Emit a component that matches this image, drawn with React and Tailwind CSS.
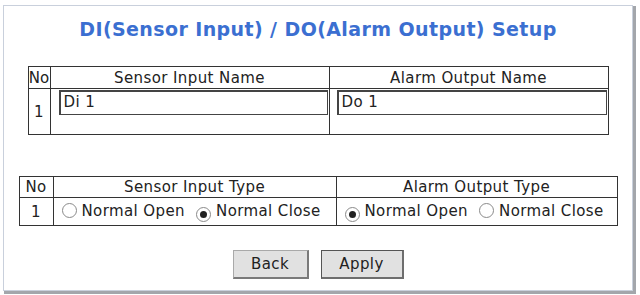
import React from "react";

const font = { fontFamily: '"DejaVu Sans", Verdana, sans-serif' };

function Radio({ checked, second }) {
  return (
    <span
      className={
        second
          ? "inline-flex items-center justify-center w-[15px] h-[15px] rounded-full border border-[#8a8a8a] bg-white ml-[11px] mr-[5px] align-[-2px]"
          : "inline-flex items-center justify-center w-[15px] h-[15px] rounded-full border border-[#8a8a8a] bg-white ml-[1px] mr-[5px] align-[-2px]"
      }
    >
      {checked && <span className="w-[7px] h-[7px] rounded-full bg-[#222]" />}
    </span>
  );
}

export default function App() {
  return (
    <div className="w-[640px] h-[295px] bg-white overflow-hidden text-[#222]" style={font}>
      <div className="ml-[3px] mt-[5px] w-[630px] h-[286px] bg-white border border-[#c9d0dc] shadow-[2px_2px_0_1px_#a3a6ab] flex flex-col items-center">
        <h1 className="mt-[12px] text-[19px] leading-[22px] tracking-[0.4px] font-bold text-[#3b6fd1]">
          DI(Sensor Input) / DO(Alarm Output) Setup
        </h1>

        <table className="mt-[26px] w-[581px] border-collapse border border-[#333] text-[15px] leading-[20px] tracking-[0.4px]">
          <thead>
            <tr className="h-[22px]">
              <th className="w-[22px] border border-[#333] font-normal p-0 text-center tracking-normal">No</th>
              <th className="w-[279px] border border-[#333] font-normal p-0 text-center">Sensor Input Name</th>
              <th className="border border-[#333] font-normal p-0 text-center">Alarm Output Name</th>
            </tr>
          </thead>
          <tbody>
            <tr className="h-[46px]">
              <td className="border border-[#333] text-center p-0">1</td>
              <td className="border border-[#333] align-top pt-[1px] pl-[8px] pr-[1px]">
                <div className="h-[25px] border-2 border-[#444] border-b border-r bg-white pl-[3px] leading-[20px]">Di 1</div>
              </td>
              <td className="border border-[#333] align-top pt-[1px] pl-[7px] pr-[1px]">
                <div className="h-[25px] border-2 border-[#444] border-b border-r bg-white pl-[3px] leading-[20px]">Do 1</div>
              </td>
            </tr>
          </tbody>
        </table>

        <table className="mt-[41px] w-[599px] border-collapse border border-[#333] text-[15px] leading-[20px] tracking-[0.4px]">
          <thead>
            <tr className="h-[21px]">
              <th className="w-[34px] border border-[#333] font-normal p-0 text-center">No</th>
              <th className="w-[283px] border border-[#333] font-normal p-0 text-center">Sensor Input Type</th>
              <th className="border border-[#333] font-normal p-0 text-center">Alarm Output Type</th>
            </tr>
          </thead>
          <tbody>
            <tr className="h-[28px]">
              <td className="border border-[#333] text-center p-0">1</td>
              <td className="border border-[#333] p-0 pl-[7px] whitespace-nowrap">
                <Radio />Normal Open<Radio checked second />Normal Close
              </td>
              <td className="border border-[#333] p-0 pl-[7px] whitespace-nowrap">
                <Radio checked />Normal Open<Radio second />Normal Close
              </td>
            </tr>
          </tbody>
        </table>

        <div className="mt-[24px] flex gap-[12px]">
          <button className="w-[76px] h-[29px] bg-[#e1e1e1] text-[15px] tracking-[0.4px] text-[#222] border border-t-[#a9a9a9] border-l-[#a9a9a9] border-r-2 border-b-2 border-r-[#7a7a7a] border-b-[#7a7a7a]" style={font}>
            Back
          </button>
          <button className="w-[83px] h-[29px] bg-[#e1e1e1] text-[15px] tracking-[0.4px] text-[#222] border border-[#555] border-r-2 border-b-2 border-r-[#6e6e6e] border-b-[#6e6e6e]" style={font}>
            Apply
          </button>
        </div>
      </div>
    </div>
  );
}
